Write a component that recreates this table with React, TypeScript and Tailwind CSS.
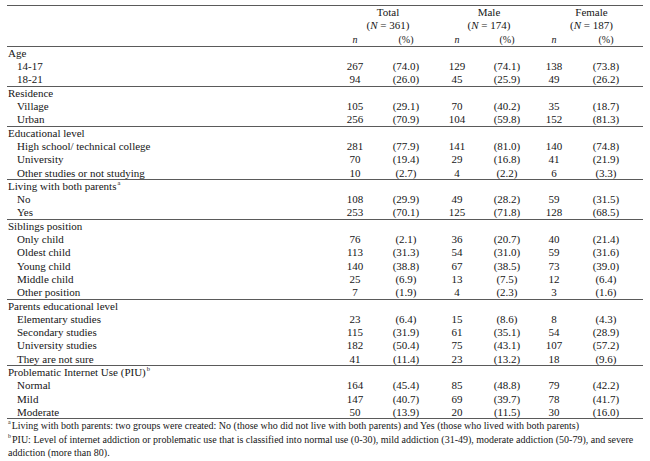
import React from "react";

type Row = { label: string; sup?: string; vals?: string[]; item?: boolean };
type Group = { title: string; sup?: string; rows: [string, string[]][] };

const groups: Group[] = [
  { title: "Age", rows: [["14-17", ["267", "(74.0)", "129", "(74.1)", "138", "(73.8)"]], ["18-21", ["94", "(26.0)", "45", "(25.9)", "49", "(26.2)"]]] },
  { title: "Residence", rows: [["Village", ["105", "(29.1)", "70", "(40.2)", "35", "(18.7)"]], ["Urban", ["256", "(70.9)", "104", "(59.8)", "152", "(81.3)"]]] },
  {
    title: "Educational level",
    rows: [
      ["High school/ technical college", ["281", "(77.9)", "141", "(81.0)", "140", "(74.8)"]],
      ["University", ["70", "(19.4)", "29", "(16.8)", "41", "(21.9)"]],
      ["Other studies or not studying", ["10", "(2.7)", "4", "(2.2)", "6", "(3.3)"]],
    ],
  },
  { title: "Living with both parents", sup: "a", rows: [["No", ["108", "(29.9)", "49", "(28.2)", "59", "(31.5)"]], ["Yes", ["253", "(70.1)", "125", "(71.8)", "128", "(68.5)"]]] },
  {
    title: "Siblings position",
    rows: [
      ["Only child", ["76", "(2.1)", "36", "(20.7)", "40", "(21.4)"]],
      ["Oldest child", ["113", "(31.3)", "54", "(31.0)", "59", "(31.6)"]],
      ["Young child", ["140", "(38.8)", "67", "(38.5)", "73", "(39.0)"]],
      ["Middle child", ["25", "(6.9)", "13", "(7.5)", "12", "(6.4)"]],
      ["Other position", ["7", "(1.9)", "4", "(2.3)", "3", "(1.6)"]],
    ],
  },
  {
    title: "Parents educational level",
    rows: [
      ["Elementary studies", ["23", "(6.4)", "15", "(8.6)", "8", "(4.3)"]],
      ["Secondary studies", ["115", "(31.9)", "61", "(35.1)", "54", "(28.9)"]],
      ["University studies", ["182", "(50.4)", "75", "(43.1)", "107", "(57.2)"]],
      ["They are not sure", ["41", "(11.4)", "23", "(13.2)", "18", "(9.6)"]],
    ],
  },
  {
    title: "Problematic Internet Use (PIU)",
    sup: "b",
    rows: [
      ["Normal", ["164", "(45.4)", "85", "(48.8)", "79", "(42.2)"]],
      ["Mild", ["147", "(40.7)", "69", "(39.7)", "78", "(41.7)"]],
      ["Moderate", ["50", "(13.9)", "20", "(11.5)", "30", "(16.0)"]],
    ],
  },
];

const gridCols = "grid grid-cols-[323px_50px_52px_50px_50px_44px_60px_1fr]";

function DataRow({ label, vals, item, sup, last }: Row & { last?: boolean }) {
  return (
    <div className={`${gridCols} h-[13.3px] leading-[13px] ${last ? "border-b-[1.5px] border-[#5a5a5a]" : ""}`}>
      <div className={`whitespace-nowrap ${item ? "pl-[10px]" : "pl-[1px]"}`}>
        {label}
        {sup && <sup className="text-[6.5px] align-[2px] ml-[1px]">{sup}</sup>}
      </div>
      {(vals ?? ["", "", "", "", "", ""]).map((v, i) => (
        <div key={i} className="text-center">
          {v}
        </div>
      ))}
      <div />
    </div>
  );
}

export default function App() {
  return (
    <div className="w-[650px] h-[461px] bg-white overflow-hidden pt-[5px] px-[7px] text-[11px] text-[#161616] font-['Liberation_Serif',serif]">
      <div className="border-t-[1.5px] border-b-[1.5px] border-[#5a5a5a]">
        <div className="grid grid-cols-[331px_100px_102px_1fr] h-[13.3px] leading-[13px]">
          <div />
          <div className="text-center">Total</div>
          <div className="text-center">Male</div>
          <div className="text-center">Female</div>
        </div>
        <div className="grid grid-cols-[331px_100px_102px_1fr] h-[13.3px] leading-[13px]">
          <div />
          <div className="text-center">
            (<i>N</i> = 361)
          </div>
          <div className="text-center">
            (<i>N</i> = 174)
          </div>
          <div className="text-center">
            (<i>N</i> = 187)
          </div>
        </div>
        <div className={`${gridCols} h-[13.3px] leading-[13px] text-[10px]`}>
          <div />
          <div className="text-center italic">n</div>
          <div className="text-center">(%)</div>
          <div className="text-center italic">n</div>
          <div className="text-center">(%)</div>
          <div className="text-center italic">n</div>
          <div className="text-center">(%)</div>
          <div />
        </div>
      </div>
      {groups.map((g) => (
        <div key={g.title}>
          <DataRow label={g.title} sup={g.sup} />
          {g.rows.map(([label, vals], i) => (
            <DataRow key={label} label={label} vals={vals} item last={i === g.rows.length - 1} />
          ))}
        </div>
      ))}
      <div className="text-[10px] leading-[13.3px] pl-[1px]">
        <div className="whitespace-nowrap">
          <sup className="text-[6px] align-[2px] mr-[1px]">a</sup>Living with both parents: two groups were created: No (those who did not live with both parents) and Yes (those who lived with both parents)
        </div>
        <div className="whitespace-nowrap">
          <sup className="text-[6px] align-[2px] mr-[1px]">b</sup>PIU: Level of internet addiction or problematic use that is classified into normal use (0-30), mild addiction (31-49), moderate addiction (50-79), and severe
        </div>
        <div>addiction (more than 80).</div>
      </div>
    </div>
  );
}
